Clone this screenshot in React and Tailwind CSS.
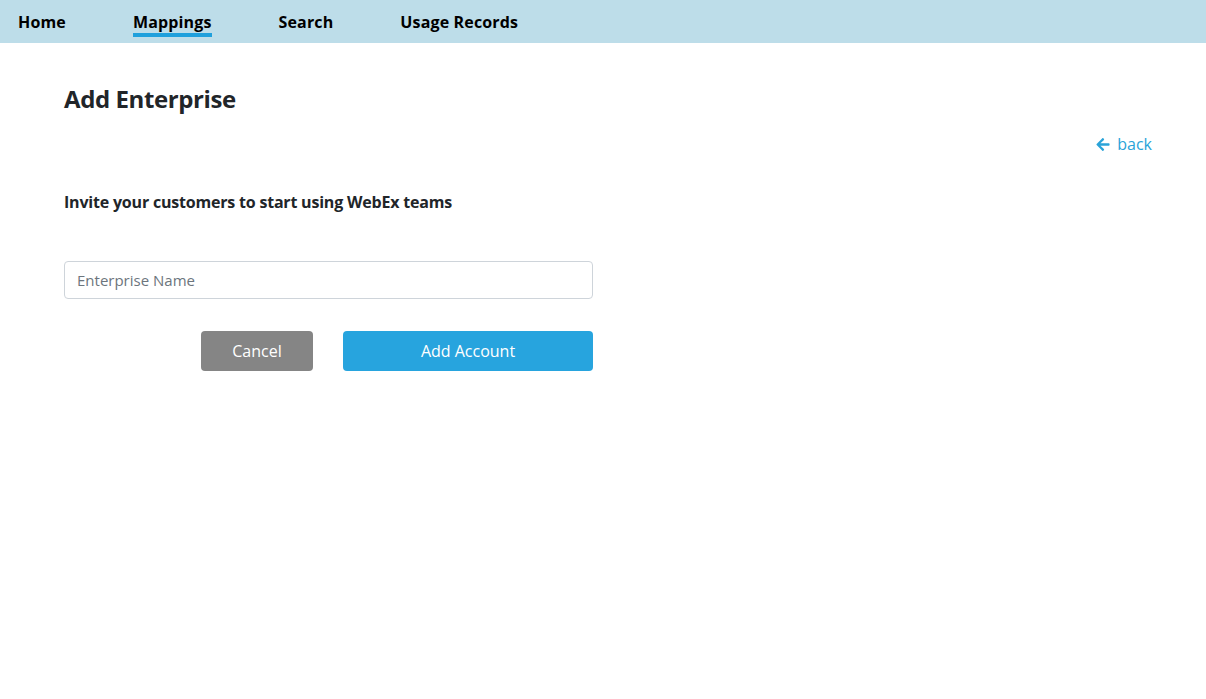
import { useState } from 'react';

// 上部ナビゲーション
const navItems = [
    { label: 'Home', active: false },
    { label: 'Mappings', active: true },
    { label: 'Search', active: false },
    { label: 'Usage Records', active: false },
];

export default function App() {
    const [name, setName] = useState('');

    return (
        <div className="min-h-[699px] bg-white text-[#212529] font-['Open_Sans',sans-serif]">
            {/* ナビバー */}
            <nav className="h-[43px] bg-[#bddde9] flex items-stretch pl-[18px] gap-[67px]">
                {navItems.map((item) => (
                    <a
                        key={item.label}
                        href="#"
                        className="relative flex items-center text-[16px] font-bold text-black tracking-[0.15px]"
                    >
                        {item.label}
                        {item.active && (
                            <span className="absolute left-0 right-0 top-[33px] h-[4px] bg-[#1fa0dc]" />
                        )}
                    </a>
                ))}
            </nav>

            <main className="px-[64px] pt-[42px] pr-[54px]">
                <h1 className="text-[24px] font-bold leading-[28px] tracking-[-0.4px]">Add Enterprise</h1>

                <div className="flex justify-end mt-[20px]">
                    <a href="#" className="flex items-center gap-[7px] text-[16px] leading-[22px] text-[#2aa3d8]">
                        <svg viewBox="0 0 448 512" className="w-[14px] h-[15px]" fill="currentColor">
                            <path d="M257.5 445.1l-22.2 22.2c-9.4 9.4-24.6 9.4-33.9 0L7 273c-9.4-9.4-9.4-24.6 0-33.9L201.4 44.7c9.4-9.4 24.6-9.4 33.9 0l22.2 22.2c9.5 9.5 9.3 25-.4 34.3L136.6 216H424c13.3 0 24 10.7 24 24v32c0 13.3-10.7 24-24 24H136.6l120.5 114.8c9.8 9.3 10 24.8.4 34.3z" />
                        </svg>
                        back
                    </a>
                </div>

                <p className="mt-[37px] text-[16px] font-bold leading-[20px] tracking-[-0.2px]">
                    Invite your customers to start using WebEx teams
                </p>

                <div className="w-[529px] mt-[49px]">
                    <input
                        type="text"
                        value={name}
                        onChange={(e) => setName(e.target.value)}
                        placeholder="Enterprise Name"
                        className="w-full h-[38px] px-[12px] border border-[#ced4da] rounded-[4px] text-[15px] placeholder:text-[#6c757d] outline-none"
                    />

                    <div className="flex justify-end gap-[30px] mt-[32px]">
                        <button className="w-[112px] h-[40px] rounded-[4px] bg-[#858585] text-white text-[16px]">
                            Cancel
                        </button>
                        <button className="w-[250px] h-[40px] rounded-[4px] bg-[#27a4de] text-white text-[16px]">
                            Add Account
                        </button>
                    </div>
                </div>
            </main>
        </div>
    );
}
